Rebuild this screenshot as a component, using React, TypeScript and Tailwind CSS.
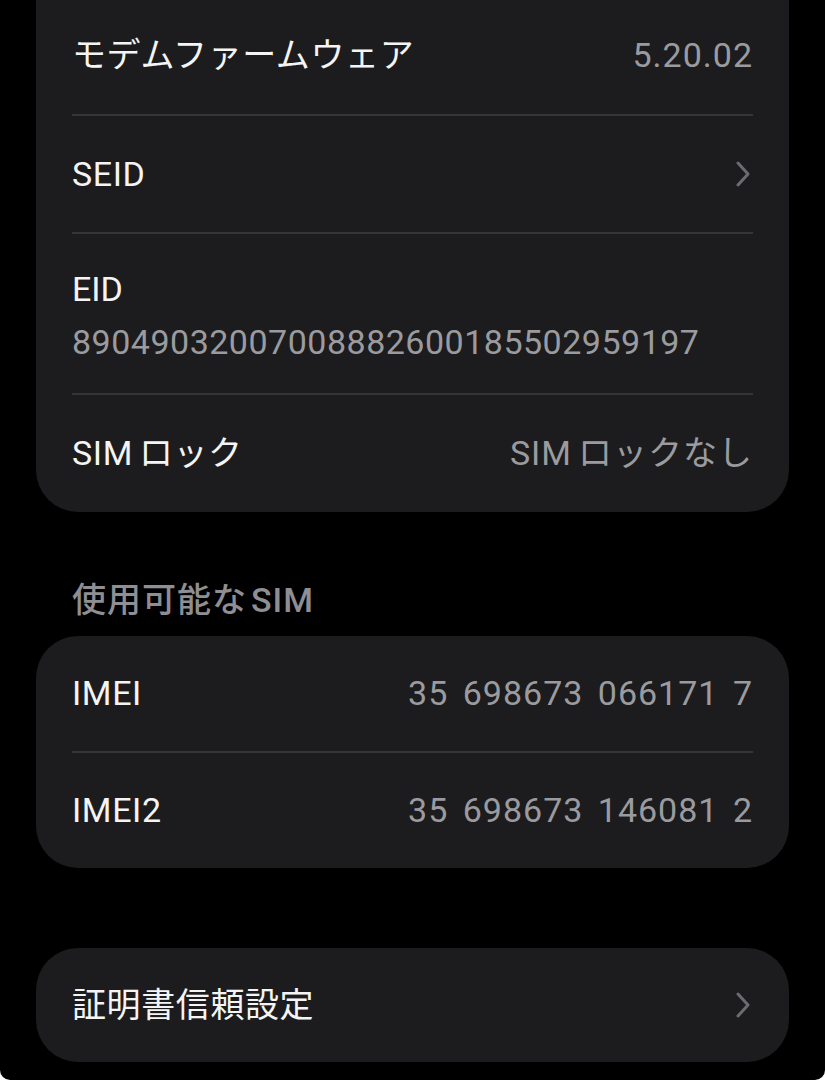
import React from 'react';

const font = { fontFamily: 'Roboto, "Noto Sans CJK JP", sans-serif' };

function Chevron() {
  return (
    <svg width="16" height="26" viewBox="0 0 16 26" fill="none" className="mr-[2px]">
      <polyline points="3,2 13,13 3,24" stroke="#6c6c70" strokeWidth="3" strokeLinecap="round" strokeLinejoin="round" />
    </svg>
  );
}

function Divider() {
  return <div className="mx-[36px] h-[2px] bg-[#353538]" />;
}

function Row({ label, value, chevron, h = 'h-[116px]' }: { label: React.ReactNode; value?: React.ReactNode; chevron?: boolean; h?: string }) {
  return (
    <div className={`${h} flex items-center justify-between px-[36px]`}>
      <span className="text-[34px] text-[#f4f4f4] tracking-[0.6px]">{label}</span>
      {value && <span className="text-[34px] text-[#9b9b9f] tracking-[1px] [word-spacing:5px]">{value}</span>}
      {chevron && <Chevron />}
    </div>
  );
}

export default function App() {
  return (
    <div className="w-[825px] h-[1080px] bg-white" style={font}>
      <div className="h-full bg-black rounded-b-[10px] overflow-hidden px-[36px]">
        {/* top card, continues above the viewport */}
        <div className="-mt-[60px] pt-[57px] bg-[#1c1c1e] rounded-[42px]">
          <Row label="モデムファームウェア" value="5.20.02" h="h-[117px]" />
          <Divider />
          <Row label="SEID" chevron />
          <Divider />
          <div className="h-[159px] px-[36px] pt-[35px] flex flex-col">
            <span className="text-[34px] leading-[40px] text-[#f4f4f4]">EID</span>
            <span className="mt-[13px] text-[34px] leading-[40px] text-[#9b9b9f] tracking-[0.5px]">
              89049032007008882600185502959197
            </span>
          </div>
          <Divider />
          <Row
            label={<>SIM<span className="ml-[6px]">ロック</span></>}
            value={<>SIM<span className="ml-[6px]">ロックなし</span></>}
            h="h-[117px]"
          />
        </div>

        <div className="mt-[68px] mb-[16px] h-[40px] px-[36px] flex items-center">
          <span className="text-[34px] font-medium text-[#8e8e93] tracking-[1px]">
            使用可能な<span className="ml-[4px]">SIM</span>
          </span>
        </div>

        <div className="bg-[#1c1c1e] rounded-[42px]">
          <Row label="IMEI" value="35 698673 066171 7" h="h-[115px]" />
          <Divider />
          <Row label="IMEI2" value="35 698673 146081 2" h="h-[115px]" />
        </div>

        <div className="mt-[80px] bg-[#1c1c1e] rounded-[42px]">
          <Row label="証明書信頼設定" chevron h="h-[114px]" />
        </div>
      </div>
    </div>
  );
}
